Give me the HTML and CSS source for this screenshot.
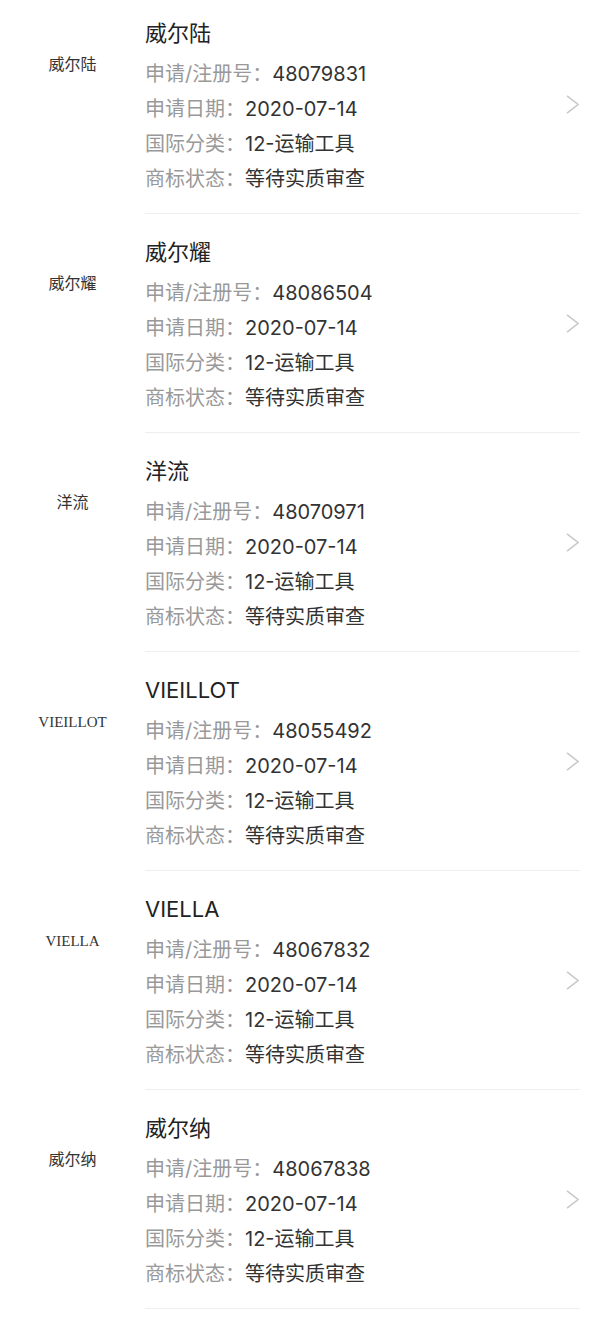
FILE: index.html
```html
<!DOCTYPE html>
<html lang="zh-CN">
<head>
  <meta charset="UTF-8" />
  <title>商标查询结果</title>
  <link rel="stylesheet" href="styles.css">
</head>
<body>
  <ul class="list">
    <li class="item">
      <div class="logo">威尔陆</div>
      <div class="info">
        <div class="text">
          <div class="name">威尔陆</div>
          <div class="row"><span class="label">申请/注册号：</span>48079831</div>
          <div class="row"><span class="label">申请日期：</span>2020-07-14</div>
          <div class="row"><span class="label">国际分类：</span>12-运输工具</div>
          <div class="row"><span class="label">商标状态：</span>等待实质审查</div>
        </div>
        <svg class="arrow" width="13" height="19" viewBox="0 0 13 19"><polyline points="1,0.8 12,9.5 1,18.2" /></svg>
      </div>
    </li>
    <li class="item">
      <div class="logo">威尔耀</div>
      <div class="info">
        <div class="text">
          <div class="name">威尔耀</div>
          <div class="row"><span class="label">申请/注册号：</span>48086504</div>
          <div class="row"><span class="label">申请日期：</span>2020-07-14</div>
          <div class="row"><span class="label">国际分类：</span>12-运输工具</div>
          <div class="row"><span class="label">商标状态：</span>等待实质审查</div>
        </div>
        <svg class="arrow" width="13" height="19" viewBox="0 0 13 19"><polyline points="1,0.8 12,9.5 1,18.2" /></svg>
      </div>
    </li>
    <li class="item">
      <div class="logo">洋流</div>
      <div class="info">
        <div class="text">
          <div class="name">洋流</div>
          <div class="row"><span class="label">申请/注册号：</span>48070971</div>
          <div class="row"><span class="label">申请日期：</span>2020-07-14</div>
          <div class="row"><span class="label">国际分类：</span>12-运输工具</div>
          <div class="row"><span class="label">商标状态：</span>等待实质审查</div>
        </div>
        <svg class="arrow" width="13" height="19" viewBox="0 0 13 19"><polyline points="1,0.8 12,9.5 1,18.2" /></svg>
      </div>
    </li>
    <li class="item">
      <div class="logo logo-latin">VIEILLOT</div>
      <div class="info">
        <div class="text">
          <div class="name">VIEILLOT</div>
          <div class="row"><span class="label">申请/注册号：</span>48055492</div>
          <div class="row"><span class="label">申请日期：</span>2020-07-14</div>
          <div class="row"><span class="label">国际分类：</span>12-运输工具</div>
          <div class="row"><span class="label">商标状态：</span>等待实质审查</div>
        </div>
        <svg class="arrow" width="13" height="19" viewBox="0 0 13 19"><polyline points="1,0.8 12,9.5 1,18.2" /></svg>
      </div>
    </li>
    <li class="item">
      <div class="logo logo-latin">VIELLA</div>
      <div class="info">
        <div class="text">
          <div class="name">VIELLA</div>
          <div class="row"><span class="label">申请/注册号：</span>48067832</div>
          <div class="row"><span class="label">申请日期：</span>2020-07-14</div>
          <div class="row"><span class="label">国际分类：</span>12-运输工具</div>
          <div class="row"><span class="label">商标状态：</span>等待实质审查</div>
        </div>
        <svg class="arrow" width="13" height="19" viewBox="0 0 13 19"><polyline points="1,0.8 12,9.5 1,18.2" /></svg>
      </div>
    </li>
    <li class="item">
      <div class="logo">威尔纳</div>
      <div class="info">
        <div class="text">
          <div class="name">威尔纳</div>
          <div class="row"><span class="label">申请/注册号：</span>48067838</div>
          <div class="row"><span class="label">申请日期：</span>2020-07-14</div>
          <div class="row"><span class="label">国际分类：</span>12-运输工具</div>
          <div class="row"><span class="label">商标状态：</span>等待实质审查</div>
        </div>
        <svg class="arrow" width="13" height="19" viewBox="0 0 13 19"><polyline points="1,0.8 12,9.5 1,18.2" /></svg>
      </div>
    </li>
  </ul>
</body>
</html>
```

FILE: styles.css
```css
body {
  margin: 0;
  background: #fff;
  font-family: Inter, "Noto Sans CJK SC", sans-serif;
  color: #333;
}
.list {
  list-style: none;
  margin: -5px 0 0;
  padding: 0;
}
.item {
  display: flex;
}
.logo {
  width: 145px;
  flex-shrink: 0;
  padding-top: 60px;
  line-height: 20px;
  text-align: center;
  font-family: "Liberation Serif", "Noto Sans CJK SC", serif;
  font-size: 16px;
  color: #333;
}
.logo-latin {
  font-size: 15px;
}
.info {
  flex: 1;
  display: flex;
  align-items: center;
  margin-right: 20px;
  padding: 20px 0 16px;
  border-bottom: 1px solid #eeeeee;
}
.text {
  flex: 1;
}
.name {
  font-size: 22px;
  line-height: 36px;
  color: #222;
  margin-bottom: 6px;
}
.row {
  font-size: 20px;
  line-height: 35px;
  color: #333;
}
.label {
  color: #999;
}
.arrow {
  margin: 0 1px 4px 0;
}
.arrow polyline {
  fill: none;
  stroke: #c8c8c8;
  stroke-width: 1.5;
}
```
